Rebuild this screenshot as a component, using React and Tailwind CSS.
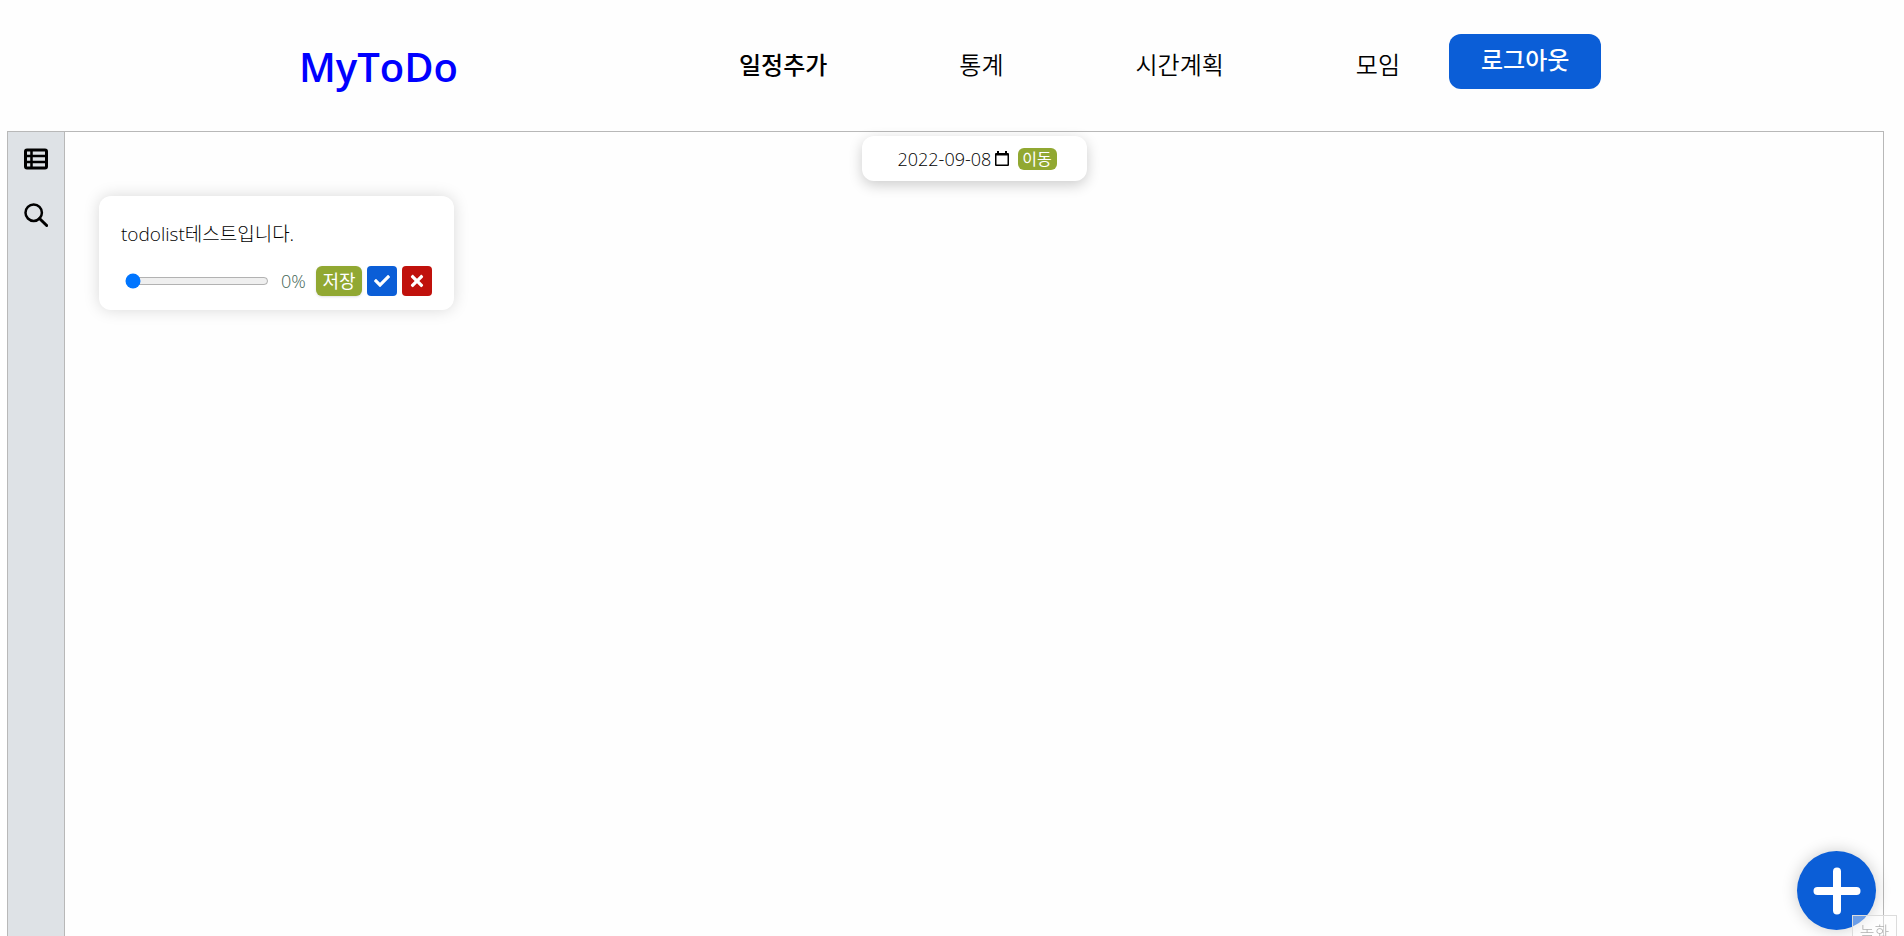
import { useState } from 'react';
import { FaCheck, FaTimes } from 'react-icons/fa';

const menus = [
  { id: 'add', label: '일정추가', active: true },
  { id: 'stats', label: '통계' },
  { id: 'plan', label: '시간계획' },
  { id: 'group', label: '모임' },
];

const ListIcon = () => (
  <svg viewBox="0 0 24 24" className="size-6" fill="none" stroke="currentColor" strokeWidth="3">
    <rect x="1.500" y="3" width="21" height="18" rx="1.500" />
    <path d="M1.500 9h21M1.500 15h21M7.500 3v18" strokeWidth="2.500" />
  </svg>
);

const SearchIcon = () => (
  <svg viewBox="0 0 24 24" className="size-6" fill="none" stroke="currentColor" strokeWidth="2.500">
    <circle cx="9.700" cy="9.700" r="8.200" />
    <path d="M15.500 15.500l7.200 7" strokeWidth="3" strokeLinecap="round" />
  </svg>
);

// 상단 메뉴
const Header = () => (
  <header className="flex h-[131px] items-start pl-[299px]">
    <a href="#home" className="mt-[38px] w-[440px] text-[40px] leading-[58px] font-semibold text-[#0000ff]">
      MyToDo
    </a>
    <nav className="mt-[47px] flex gap-[132px]">
      {menus.map((menu) => (
        <a
          key={menu.id}
          href={`#${menu.id}`}
          className={`text-2xl leading-9 text-black ${menu.active ? 'font-medium' : 'font-[350]'}`}
        >
          {menu.label}
        </a>
      ))}
    </nav>
    <button type="button" className="mt-[34px] ml-[49px] h-[55px] rounded-xl bg-[#0b5ed7] px-8 text-2xl font-medium text-white">
      <span className="block pb-1 leading-[48px]">로그아웃</span>
    </button>
  </header>
);

// 왼쪽 사이드바
const Sidebar = () => (
  <aside className="flex w-[57px] shrink-0 flex-col items-center gap-8 border-r border-[#b8b8b8] bg-[#dee2e6] pt-[15px] text-black">
    <button type="button" aria-label="목록">
      <ListIcon />
    </button>
    <button type="button" aria-label="검색">
      <SearchIcon />
    </button>
  </aside>
);

// 날짜 이동
const DateBar = () => {
  const [date, setDate] = useState('2022-09-08');

  return (
    <form className="mx-auto mt-1 flex h-[45px] w-[225px] items-center rounded-xl bg-white pl-9 shadow-[0_4px_14px_rgba(0,0,0,0.2)]">
      <input
        type="text"
        aria-label="날짜"
        value={date}
        onChange={(e) => setDate(e.target.value)}
        className="w-[97px] text-lg font-light text-black outline-none"
      />
      <svg viewBox="0 0 14 16" className="h-4 w-[14px] shrink-0">
        <path d="M2 0h2v2h6V0h2v2h1a1 1 0 0 1 1 1v11a1 1 0 0 1-1 1H1a1 1 0 0 1-1-1V3a1 1 0 0 1 1-1h1zM1.500 4.500v9h11v-9z" fillRule="evenodd" />
      </svg>
      <button type="button" className="ml-[9px] h-[22px] w-[39px] rounded-md bg-[#91a832] text-base leading-[20px] text-white">
        이동
      </button>
    </form>
  );
};

// 할일 카드
const TodoCard = ({ text }) => {
  const [progress, setProgress] = useState(0);

  return (
    <li className="h-[114px] w-[355px] rounded-xl bg-white px-[22px] pt-6 shadow-[0_0_16px_rgba(0,0,0,0.15)]">
      <p className="text-[19px] leading-7 font-light text-black">{text}</p>
      <div className="mt-[18px] flex items-center">
        <input
          type="range"
          aria-label="진행률"
          min="0"
          max="100"
          value={progress}
          onChange={(e) => setProgress(Number(e.target.value))}
          className="ml-1 w-[144px] accent-[#0075ff]"
        />
        <span className="ml-3 w-[35px] text-lg leading-7 font-light text-[#3f6555]">{progress}%</span>
        <div className="flex gap-[5px] text-white">
          <button type="button" className="h-[30px] w-[46px] rounded-md bg-[#91a832] text-lg leading-[28px] shadow-sm">
            저장
          </button>
          <button type="button" aria-label="완료" className="flex size-[30px] items-center justify-center rounded-sm bg-[#0b5ed7]">
            <FaCheck className="size-4" />
          </button>
          <button type="button" aria-label="삭제" className="flex size-[30px] items-center justify-center rounded-sm bg-[#c0110c]">
            <FaTimes className="size-[18px]" />
          </button>
        </div>
      </div>
    </li>
  );
};

const App = () => {
  return (
    <div className="flex h-screen flex-col overflow-hidden bg-[#fefefe] font-['Open_Sans','Noto_Sans_CJK_KR',sans-serif]">
      <Header />
      <main className="mr-5 ml-[7px] flex grow border-x border-t border-[#b8b8b8]">
        <Sidebar />
        <section className="grow">
          <DateBar />
          <ul className="mt-[15px] ml-[34px]">
            <TodoCard text="todolist테스트입니다." />
          </ul>
        </section>
      </main>

      <button
        type="button"
        aria-label="일정 추가"
        className="fixed right-7 bottom-[6px] flex size-[79px] items-center justify-center rounded-full bg-[#0b5ed7] shadow-[0_0_16px_rgba(0,0,0,0.2)]"
      >
        <svg viewBox="0 0 48 48" className="size-12">
          <path d="M24 4.500v39M4.500 24h39" stroke="white" strokeWidth="8" strokeLinecap="round" />
        </svg>
      </button>
      <div className="fixed right-[7px] -bottom-3 h-[33px] w-[45px] border border-[#dcdcdc] bg-white/40 text-center text-base leading-8 font-light text-[#b0b0b0]">
        녹화
      </div>
    </div>
  );
};

export default App;
